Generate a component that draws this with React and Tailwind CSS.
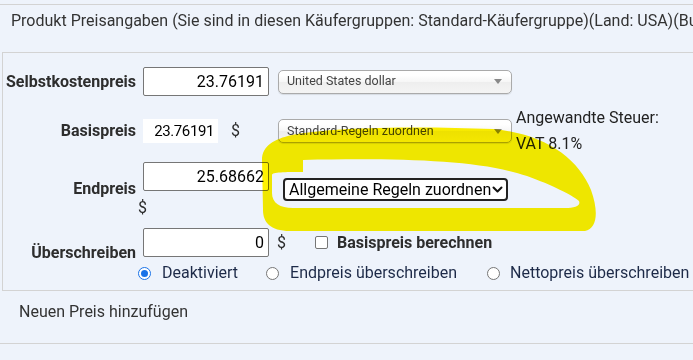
import React from "react";

function ChosenSelect({ label }) {
  return (
    <div className="flex items-center justify-between w-[234px] h-[24px] rounded-[5px] border border-[#aaa] bg-[linear-gradient(#ffffff_20%,#f6f6f6_50%,#eeeeee_52%,#f4f4f4_100%)] shadow-[0_1px_1px_rgba(0,0,0,0.1)] pl-[8px] pr-[9px] text-[12.5px] text-[#444] leading-none">
      <span className="whitespace-nowrap">{label}</span>
      <svg width="8" height="5" viewBox="0 0 8 5">
        <path d="M0 0 L8 0 L4 5 Z" fill="#888" />
      </svg>
    </div>
  );
}

function Radio({ checked }) {
  return checked ? (
    <span className="flex items-center justify-center w-[13px] h-[13px] rounded-full border-[1.5px] border-[#1a73e8] bg-white shrink-0">
      <span className="w-[7px] h-[7px] rounded-full bg-[#1a73e8]" />
    </span>
  ) : (
    <span className="block w-[13px] h-[13px] rounded-full border border-[#767676] bg-white shrink-0" />
  );
}

function NumInput({ value }) {
  return (
    <div className="ml-[5px] w-[126px] h-[29px] border border-[#767676] rounded-[2px] bg-white flex items-center justify-end pr-[4px] text-[16px] text-black">
      {value}
    </div>
  );
}

export default function App() {
  return (
    <div className="relative w-[693px] h-[360px] overflow-hidden bg-[#eef3fb] font-[Roboto,sans-serif] text-[#2b2b2b]">
      <div className="mt-[4px] border-t border-[#d3d3d3]">
        <div className="h-[47px] pt-[6px] pl-[11px] text-[16px] leading-[20px] text-[#333] whitespace-nowrap">
          Produkt Preisangaben (Sie sind in diesen Käufergruppen: Standard-Käufergruppe)(Land: USA)(Bu
        </div>
        <div className="ml-[2px] w-[720px] border border-[#d3d3d3] pt-[14px] pb-[5px]">
          {/* Row 1 */}
          <div className="flex items-center h-[29px]">
            <div className="w-[135px] pr-[2px] text-right font-bold text-[16px] text-[#2d2d2d]">Selbstkostenpreis</div>
            <div className="w-[131px]">
              <NumInput value="23.76191" />
            </div>
            <div className="ml-[9px]">
              <ChosenSelect label="United States dollar" />
            </div>
          </div>
          {/* Row 2 */}
          <div className="flex items-center h-[52px] mt-[9px]">
            <div className="w-[135px] pr-[2px] text-right font-bold text-[16px] text-[#2d2d2d]">Basispreis</div>
            <div className="w-[131px] flex items-center">
              <div className="ml-[5px] w-[75px] h-[24px] bg-white flex items-center justify-end pr-[4px] text-[15px] tracking-[-0.4px] text-black">
                23.76191
              </div>
              <span className="ml-[13px] text-[16px]">$</span>
            </div>
            <div className="ml-[9px]">
              <ChosenSelect label="Standard-Regeln zuordnen" />
            </div>
            <div className="ml-[4px] text-[16px] leading-[26px] text-[#222]">
              <div>Angewandte Steuer:</div>
              <div>VAT 8.1%</div>
            </div>
          </div>
          {/* Row 3 */}
          <div className="flex items-center h-[63px]">
            <div className="w-[135px] pr-[2px] text-right font-bold text-[16px] text-[#2d2d2d]">Endpreis</div>
            <div className="w-[131px] self-start">
              <div className="mt-[5px]">
                <NumInput value="25.68662" />
              </div>
              <div className="mt-[5px] leading-[24px] text-[16px]">$</div>
            </div>
            <div className="ml-[14px] mt-[2px] w-[225px] h-[23px] border-2 border-[#222] rounded-[4px] bg-white flex items-center justify-between pl-[4px] pr-[3px] text-[16px] text-black leading-none">
              <span className="whitespace-nowrap">Allgemeine Regeln zuordnen</span>
              <svg width="11" height="7" viewBox="0 0 11 7">
                <path d="M1.5 1.5 L5.5 5.5 L9.5 1.5" fill="none" stroke="#111" strokeWidth="2" strokeLinecap="round" strokeLinejoin="round" />
              </svg>
            </div>
          </div>
          {/* Row 4 + radios */}
          <div className="flex">
            <div className="w-[135px] pr-[2px] flex items-center justify-end font-bold text-[16px] text-[#2d2d2d]">Überschreiben</div>
            <div className="pt-[8px]">
              <div className="flex items-center h-[29px]">
                <NumInput value="0" />
                <span className="ml-[8px] text-[16px]">$</span>
                <span className="ml-[29px] block w-[13px] h-[13px] rounded-[2px] border border-[#767676] bg-white" />
                <span className="ml-[9px] font-bold text-[16px] text-[#2d2d2d] whitespace-nowrap">Basispreis berechnen</span>
              </div>
              <div className="mt-[4px] h-[24px] flex items-center text-[16px] text-[#1d2a48] whitespace-nowrap">
                <Radio checked />
                <span className="ml-[11px]">Deaktiviert</span>
                <span className="ml-[28px] flex"><Radio /></span>
                <span className="ml-[11px]">Endpreis überschreiben</span>
                <span className="ml-[30px] flex"><Radio /></span>
                <span className="ml-[10px]">Nettopreis überschreiben</span>
              </div>
            </div>
          </div>
        </div>
        <div className="h-[52px] pt-[11px] pl-[19px] text-[16px] leading-[20px] text-[#333]">
          Neuen Preis hinzufügen
        </div>
        <div className="border-t border-[#d3d3d3]" />
      </div>
      <svg className="absolute left-0 top-0 pointer-events-none mix-blend-multiply" width="693" height="360" viewBox="0 0 693 360">
        <path
          fillRule="evenodd"
          fill="#fff200"
          d="M262 160 C262 146 274 139 292 135 C330 127 420 126 493 129 C545 134 578 158 591 190 C599 212 597 229 585 231 L290 231 C270 231 263 222 263 210 Z M303 160 C400 158 480 160 527 176 C552 185 572 195 579 201 C581 206 575 208 565 208 L293 208 C280 208 272 203 272 193 L272 175 C272 172 285 172 303 172 Z"
        />
      </svg>
    </div>
  );
}
